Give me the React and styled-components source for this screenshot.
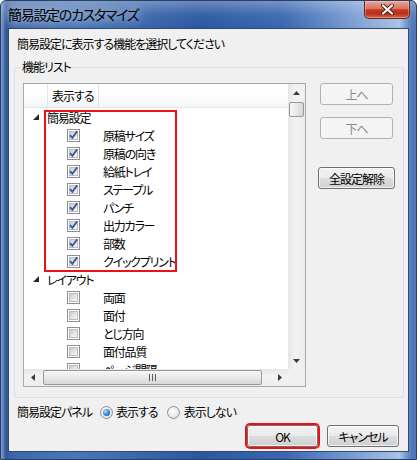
import React from 'react'
import styled, { createGlobalStyle } from 'styled-components'

const GlobalStyle = createGlobalStyle`
  html, body {
    margin: 0;
    padding: 0;
    background: #ffffff;
  }
  body {
    font-family: "Noto Sans CJK JP", "Noto Sans", sans-serif;
    font-size: 12px;
    letter-spacing: -1px;
    font-feature-settings: "palt";
  }
`;

const Window = styled.div`
  width: 417px;
  height: 460px;
  box-sizing: border-box;
  display: flex;
  flex-direction: column;
  border: 1px solid #2b3f60;
  border-radius: 6px 6px 0 0;
  overflow: hidden;
  background:
    linear-gradient(180deg, rgba(255,255,255,.3) 0px, rgba(255,255,255,.06) 14px, rgba(255,255,255,0) 27px),
    linear-gradient(90deg, #7fa0d4 0, #2f5898 1.2%, #3d67ab 3%, #4c76b6 18%, #2a57a1 48%, #3866af 68%, #82a4d7 87%, #a9c2e6 96%, #4f77b9 99%);
`;

const TitleBar = styled.div`
  height: 27px;
  flex: none;
  display: flex;
  justify-content: space-between;
  align-items: flex-start;
  padding-left: 7px;
`;

const Title = styled.div`
  margin-top: 6px;
  font-size: 14px;
  line-height: 14px;
  letter-spacing: -1.3px;
  color: #000;
  text-shadow: 0 0 8px rgba(255,255,255,.75), 0 0 14px rgba(255,255,255,.45);
`;

const CloseButton = styled.div`
  width: 46px;
  height: 18px;
  margin-right: 6px;
  box-sizing: border-box;
  border: 1px solid #6b2418;
  border-top: none;
  border-radius: 0 0 5px 5px;
  display: flex;
  align-items: center;
  justify-content: center;
  background: linear-gradient(180deg, #e8ab9c 0%, #d5725c 45%, #c23a20 52%, #b8301a 75%, #d66a4d 100%);
  box-shadow: inset 0 0 0 1px rgba(255,220,210,.35);
`;

const Client = styled.div`
  flex: 1;
  margin: 0 7px 7px;
  background: #f0f0f0;
  border: 1px solid #34486a;
  display: flex;
  flex-direction: column;
  padding: 7px 4px 0;
  color: #000;
`;

const Instruction = styled.div`
  line-height: 16px;
  padding-left: 4px;
`;

const GroupBox = styled.fieldset`
  margin: 8px 0 0 1px;
  padding: 9px 8px 10px 8px;
  border: 1px solid #d5dfe5;
  border-radius: 3px;
  min-width: 0;
`;

const Legend = styled.legend`
  margin-left: -3px;
  padding: 0 2px;
  line-height: 14px;
`;

const GroupBody = styled.div`
  display: flex;
  gap: 12px;
`;

const TreeBox = styled.div`
  flex: 1;
  height: 304px;
  box-sizing: border-box;
  border: 1px solid #a4a9b0;
  background: #fff;
  display: grid;
  grid-template-columns: 1fr 17px;
  grid-template-rows: 1fr 17px;
  overflow: hidden;
`;

const TreeContent = styled.div`
  position: relative;
  overflow: hidden;
`;

const Header = styled.div`
  display: flex;
  height: 23px;
  border-bottom: 1px solid #e3e4e6;
  background: linear-gradient(180deg, #ffffff 0%, #ffffff 40%, #f2f4f6 100%);
`;

const HeaderCell = styled.div`
  width: ${p => p.$w ? `${p.$w}px` : 'auto'};
  flex: ${p => p.$w ? 'none' : '1'};
  box-sizing: border-box;
  padding-left: 4px;
  line-height: 23px;
  border-right: ${p => p.$w ? '1px solid #e3e4e6' : 'none'};
`;

const Row = styled.div`
  height: 18px;
  display: flex;
  align-items: center;
  padding-left: ${p => p.$indent}px;
  white-space: nowrap;
  letter-spacing: -1.2px;
`;

const Expander = styled.span`
  width: 14px;
  flex: none;
  display: flex;
  align-items: center;
`;

const CheckBox = styled.span`
  width: 13px;
  height: 13px;
  box-sizing: border-box;
  border: 1px solid #8e8f8f;
  background: #fff;
  padding: 1px;
  flex: none;
  margin-right: 23px;
`;

const CheckInner = styled.span`
  display: flex;
  align-items: center;
  justify-content: center;
  width: 9px;
  height: 9px;
  box-sizing: border-box;
  border: 1px solid #b9bdc2;
  background: linear-gradient(135deg, #c9ccd1 0%, #e6e7e9 60%, #f7f7f7 100%);
`;

const Callout = styled.div`
  position: absolute;
  left: 20px;
  top: 26px;
  width: 133px;
  height: 162px;
  box-sizing: border-box;
  border: 2px solid #ee1111;
  pointer-events: none;
`;

const VScroll = styled.div`
  display: flex;
  flex-direction: column;
  background: linear-gradient(90deg, #e6e6e6 0%, #f2f2f2 40%, #eeeeee 100%);
`;

const HScroll = styled.div`
  display: flex;
  align-items: center;
  background: linear-gradient(180deg, #e6e6e6 0%, #f2f2f2 40%, #eeeeee 100%);
`;

const Arrow = styled.div`
  width: 17px;
  height: 17px;
  flex: none;
  display: flex;
  align-items: center;
  justify-content: center;
`;

const Spacer = styled.div`
  flex: 1;
`;

const Thumb = styled.div`
  flex: none;
  box-sizing: border-box;
  border: 1px solid #979797;
  border-radius: 2px;
  display: flex;
  align-items: center;
  justify-content: center;
  ${p => p.$vertical ? `
    width: 15px;
    height: 15px;
    margin: 1px 1px 0;
    background: linear-gradient(90deg, #f6f6f6 0%, #e9e9e9 50%, #d6d6d6 100%);
  ` : `
    width: 219px;
    height: 15px;
    margin-left: 2px;
    background: linear-gradient(180deg, #f6f6f6 0%, #e9e9e9 50%, #d6d6d6 100%);
  `}
`;

const Corner = styled.div`
  background: #f0f0f0;
`;

const ButtonColumn = styled.div`
  width: 77px;
  display: flex;
  flex-direction: column;
  align-items: center;
`;

const PushButton = styled.button`
  width: ${p => p.$w}px;
  height: 22px;
  margin-top: ${p => p.$top || 0}px;
  padding: 0;
  box-sizing: border-box;
  font-family: inherit;
  font-size: 12px;
  letter-spacing: -1px;
  font-feature-settings: "palt";
  border-radius: 3px;
  color: #000;
  border: 1px solid #707070;
  background: linear-gradient(180deg, #f2f2f2 0%, #ebebeb 48%, #dddddd 52%, #cfcfcf 100%);
  box-shadow: inset 0 0 0 1px rgba(255,255,255,.7);
  outline: ${p => p.$marked ? '2px solid #ee1111' : 'none'};
  &:disabled {
    color: #8a8a8a;
    border-color: #adb2b5;
    background: #f4f4f4;
    box-shadow: none;
  }
`;

const RadioRow = styled.div`
  display: flex;
  align-items: center;
  line-height: 16px;
  margin-top: 6px;
  padding-left: 4px;
`;

const RadioOption = styled.label`
  display: flex;
  align-items: center;
  gap: ${p => p.$gap}px;
  margin-left: ${p => p.$left}px;
`;

const RadioCircle = styled.span`
  width: 13px;
  height: 13px;
  box-sizing: border-box;
  border-radius: 50%;
  border: 1px solid #8d9196;
  background: radial-gradient(circle at 40% 40%, #ffffff 0%, #eeeeee 45%, #cfd1d4 100%);
  display: flex;
  align-items: center;
  justify-content: center;
`;

const RadioDot = styled.span`
  width: 7px;
  height: 7px;
  border-radius: 50%;
  background: radial-gradient(circle at 35% 35%, #b5e2fb 0%, #3f8fd6 45%, #0f4c96 100%);
`;

const ButtonRow = styled.div`
  display: flex;
  justify-content: flex-end;
  gap: 9px;
  margin-top: 5px;
  padding-right: 5px;
`;

const groups = [
  {
    label: '簡易設定',
    items: [
      ['原稿サイズ', true],
      ['原稿の向き', true],
      ['給紙トレイ', true],
      ['ステープル', true],
      ['パンチ', true],
      ['出力カラー', true],
      ['部数', true],
      ['クイックプリント', true],
    ],
  },
  {
    label: 'レイアウト',
    items: [
      ['両面', false],
      ['面付', false],
      ['とじ方向', false],
      ['面付品質', false],
      ['ページ間隔', false],
    ],
  },
];

const Tri = ({ dir }) => {
  const pts = {
    up: '0,4 3.5,0 7,4',
    down: '0,0 7,0 3.5,4',
    left: '4,0 4,7 0,3.5',
    right: '0,0 0,7 4,3.5',
  }[dir];
  const vertical = dir === 'up' || dir === 'down';
  return (
    <svg width={vertical ? 7 : 4} height={vertical ? 4 : 7}>
      <polygon points={pts} fill="#3a3a3a" />
    </svg>
  );
};

const Grip = () => (
  <svg width="7" height="7">
    {[0, 3, 6].map(o => (
      <rect key={o} x={o} y="0" width="1" height="7" fill="#5a5a5a" />
    ))}
  </svg>
);

const Check = ({ checked }) => (
  <CheckBox>
    <CheckInner>
      {checked && (
        <svg width="9" height="9" viewBox="0 0 9 9" style={{ overflow: 'visible' }}>
          <path d="M1 4.2 L3.4 6.8 L8.2 0.2" stroke="#3c55a0" strokeWidth="1.9" fill="none" />
        </svg>
      )}
    </CheckInner>
  </CheckBox>
);

const Radio = ({ selected, children, gap, left }) => (
  <RadioOption $gap={gap} $left={left}>
    <RadioCircle>{selected && <RadioDot />}</RadioCircle>
    {children}
  </RadioOption>
);

const App = () => {
  return (
    <>
      <GlobalStyle />
      <Window>
        <TitleBar>
          <Title>簡易設定のカスタマイズ</Title>
          <CloseButton>
            <svg width="13" height="11" viewBox="0 0 13 11">
              <path d="M2 1.5 L11 9.5 M11 1.5 L2 9.5" stroke="#4a1a12" strokeWidth="4" strokeLinecap="round" />
              <path d="M2 1.5 L11 9.5 M11 1.5 L2 9.5" stroke="#ffffff" strokeWidth="2.2" strokeLinecap="round" />
            </svg>
          </CloseButton>
        </TitleBar>
        <Client>
          <Instruction>簡易設定に表示する機能を選択してください</Instruction>
          <GroupBox>
            <Legend>機能リスト</Legend>
            <GroupBody>
              <TreeBox>
                <TreeContent>
                  <Header>
                    <HeaderCell $w={24} />
                    <HeaderCell $w={51}>表示する</HeaderCell>
                    <HeaderCell />
                  </Header>
                  {groups.map(g => (
                    <React.Fragment key={g.label}>
                      <Row $indent={9}>
                        <Expander>
                          <svg width="6" height="6">
                            <polygon points="6,0 6,6 0,6" fill="#262626" />
                          </svg>
                        </Expander>
                        {g.label}
                      </Row>
                      {g.items.map(([name, on]) => (
                        <Row key={name} $indent={43}>
                          <Check checked={on} />
                          {name}
                        </Row>
                      ))}
                    </React.Fragment>
                  ))}
                  <Callout />
                </TreeContent>
                <VScroll>
                  <Arrow><Tri dir="up" /></Arrow>
                  <Thumb $vertical />
                  <Spacer />
                  <Arrow><Tri dir="down" /></Arrow>
                </VScroll>
                <HScroll>
                  <Arrow><Tri dir="left" /></Arrow>
                  <Thumb><Grip /></Thumb>
                  <Spacer />
                  <Arrow><Tri dir="right" /></Arrow>
                </HScroll>
                <Corner />
              </TreeBox>
              <ButtonColumn>
                <PushButton $w={73} disabled>上へ</PushButton>
                <PushButton $w={73} $top={12} disabled>下へ</PushButton>
                <PushButton $w={77} $top={28}>全設定解除</PushButton>
              </ButtonColumn>
            </GroupBody>
          </GroupBox>
          <RadioRow>
            簡易設定パネル
            <Radio selected gap={3} left={8}>表示する</Radio>
            <Radio gap={4} left={9}>表示しない</Radio>
          </RadioRow>
          <ButtonRow>
            <PushButton $w={71} $marked>OK</PushButton>
            <PushButton $w={72}>キャンセル</PushButton>
          </ButtonRow>
        </Client>
      </Window>
    </>
  )
}

export default App
